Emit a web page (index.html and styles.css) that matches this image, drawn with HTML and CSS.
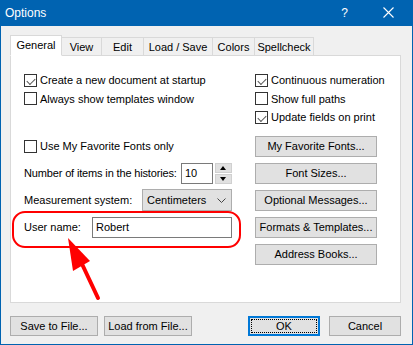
FILE: index.html
```html
<!DOCTYPE html>
<html lang="en">
<head>
  <meta charset="UTF-8" />
  <title>Options</title>
  <link rel="stylesheet" href="styles.css">
</head>
<body>
  <div class="window">
    <!-- TITLE BAR -->
    <div class="titlebar">
      <span class="title">Options</span>
      <span class="help">?</span>
      <svg class="close" width="11" height="11" viewBox="0 0 11 11">
        <path d="M0.5 0.5 L10.5 10.5 M10.5 0.5 L0.5 10.5" stroke="#fff" stroke-width="1.1" fill="none"/>
      </svg>
    </div>

    <div class="client">
      <!-- TABS -->
      <div class="tabs">
        <a class="tab active">General</a>
        <a class="tab">View</a>
        <a class="tab">Edit</a>
        <a class="tab">Load / Save</a>
        <a class="tab">Colors</a>
        <a class="tab">Spellcheck</a>
      </div>

      <!-- GENERAL PANEL -->
      <div class="panel">
        <div class="checks">
          <label class="check"><span class="box on"></span>Create a new document at startup</label>
          <label class="check"><span class="box on"></span>Continuous numeration</label>
          <label class="check"><span class="box"></span>Always show templates window</label>
          <label class="check"><span class="box"></span>Show full paths</label>
          <div></div>
          <label class="check"><span class="box on"></span>Update fields on print</label>
        </div>

        <div class="rows">
          <div class="cell">
            <label class="check"><span class="box"></span>Use My Favorite Fonts only</label>
          </div>
          <div class="cell"><button class="btn side">My Favorite Fonts...</button></div>

          <div class="cell field">
            <span class="tight">Number of items in the histories:</span>
            <span class="spin-group">
              <span class="input num">10</span>
              <span class="spinner">
                <span class="spin up"></span>
                <span class="spin down"></span>
              </span>
            </span>
          </div>
          <div class="cell"><button class="btn side">Font Sizes...</button></div>

          <div class="cell field">
            <span>Measurement system:</span>
            <span class="select">Centimeters
              <svg width="9" height="5" viewBox="0 0 9 5"><path d="M0.5 0.5 L4.5 4.5 L8.5 0.5" stroke="#444" fill="none"/></svg>
            </span>
          </div>
          <div class="cell"><button class="btn side">Optional Messages...</button></div>

          <div class="cell field">
            <span>User name:</span>
            <span class="input name">Robert</span>
          </div>
          <div class="cell"><button class="btn side">Formats &amp; Templates...</button></div>

          <div class="cell"></div>
          <div class="cell"><button class="btn side">Address Books...</button></div>
        </div>
      </div>

      <!-- DIALOG BUTTONS -->
      <div class="footer">
        <button class="btn foot">Save to File...</button>
        <button class="btn foot">Load from File...</button>
        <span class="spacer"></span>
        <button class="btn foot default"><span class="focus">OK</span></button>
        <button class="btn foot">Cancel</button>
      </div>
    </div>

    <!-- ANNOTATION -->
    <svg class="markup" width="413" height="345" viewBox="0 0 413 345">
      <rect x="13" y="212" width="227" height="35" rx="12" ry="12" fill="none" stroke="#f00" stroke-width="2"/>
      <path d="M82 264 L98 298" stroke="#f00" stroke-width="4" stroke-linecap="round"/>
      <polygon points="68,238 73,271 90,261" fill="#f00"/>
    </svg>
  </div>
</body>
</html>
```

FILE: styles.css
```css
:root {
  --accent: #0063b1;
  --face: #f0f0f0;
  --btn: #e1e1e1;
  --btn-border: #adadad;
  --edge: #d9d9d9;
  --text: #000;
}

* { box-sizing: border-box; margin: 0; padding: 0; }
body {
  background: #fff;
  font-family: "Liberation Sans", Arial, sans-serif;
  font-size: 11px;
  color: var(--text);
}

.window {
  position: relative;
  width: 413px;
  height: 345px;
  background: var(--face);
  border: 1px solid var(--accent);
  border-top: 0;
  display: flex;
  flex-direction: column;
  white-space: nowrap;
}

/* TITLE BAR */
.titlebar {
  height: 26px;
  background: var(--accent);
  color: #fff;
  display: flex;
  align-items: center;
  padding: 0 0 1px 5px;
  margin: 0 -1px;
}
.title { font-size: 12px; flex: 1; }
.help { font-size: 12px; margin-right: 35px; }
.close { margin-right: 19px; }

/* CLIENT AREA */
.client {
  flex: 1;
  padding: 9px 11px 0 9px;
  display: flex;
  flex-direction: column;
}

.tabs {
  display: flex;
  align-items: flex-end;
  height: 21px;
  position: relative;
  z-index: 1;
  margin-bottom: -1px;
}
.tab {
  height: 19px;
  border: 1px solid var(--edge);
  border-left: 0;
  background: var(--face);
  display: flex;
  align-items: center;
  justify-content: center;
}
.tab.active {
  height: 21px;
  width: 52px;
  border: 1px solid var(--edge);
  border-bottom: 1px solid #fff;
  background: #fff;
  padding-bottom: 2px;
}
.tab:nth-child(2) { width: 40px; }
.tab:nth-child(3) { width: 42px; }
.tab:nth-child(4) { width: 69px; }
.tab:nth-child(5) { width: 42px; }
.tab:nth-child(6) { width: 59px; }

.panel {
  height: 248px;
  background: #fff;
  border: 1px solid var(--edge);
  padding: 15px 0 0 13px;
}

/* CHECKBOXES */
.checks {
  display: grid;
  grid-template-columns: 231px 1fr;
  grid-auto-rows: 18.5px;
}
.check {
  display: flex;
  align-items: center;
  gap: 3px;
}
.box {
  width: 13px;
  height: 13px;
  border: 1px solid #333;
  background: #fff;
  flex: none;
  position: relative;
}
.box.on::after {
  content: "";
  position: absolute;
  left: 2px; top: 1px;
  width: 7px; height: 4px;
  border-left: 1px solid #555;
  border-bottom: 1px solid #555;
  transform: translate(0, 2px) rotate(-45deg);
}

/* CONTROL ROWS */
.rows {
  display: grid;
  grid-template-columns: 231px 1fr;
  grid-auto-rows: 27px;
  margin-top: 6px;
}
.cell {
  display: flex;
  align-items: center;
}
.cell.field {
  justify-content: space-between;
  padding-right: 23px;
}
.tight { letter-spacing: -0.15px; }

.input {
  height: 21px;
  border: 1px solid #7a7a7a;
  background: #fff;
  display: flex;
  align-items: center;
  padding-left: 3px;
}
.input.num { width: 32px; }
.input.name { width: 140px; }

.spin-group { display: flex; align-items: center; gap: 2px; }
.spinner {
  display: flex;
  flex-direction: column;
  gap: 1px;
  height: 21px;
}
.spin {
  width: 17px;
  height: 10px;
  background: var(--btn);
  border: 1px solid #d0d0d0;
  position: relative;
}
.spin::after {
  content: "";
  position: absolute;
  left: 4px; top: 2px;
  border-left: 3.5px solid transparent;
  border-right: 3.5px solid transparent;
}
.spin.up::after { border-bottom: 4px solid #000; }
.spin.down::after { border-top: 4px solid #000; }

.select {
  width: 90px;
  height: 22px;
  background: var(--btn);
  border: 1px solid var(--btn-border);
  display: flex;
  align-items: center;
  justify-content: space-between;
  padding: 0 5px 0 4px;
}

/* BUTTONS */
.btn {
  font: inherit;
  color: inherit;
  background: var(--btn);
  border: 1px solid var(--btn-border);
  height: 21px;
  display: flex;
  align-items: center;
  justify-content: center;
}
.btn.side { width: 122px; }

.footer {
  display: flex;
  align-items: center;
  margin-top: 13px;
  gap: 6px;
}
.btn.foot { width: 88px; height: 20px; }
.spacer { flex: 1; }
.btn.default {
  width: 72px;
  border: 2px solid #0078d7;
  padding: 1px;
  margin-right: 3px;
}
.btn.foot:last-child { width: 72px; }
.focus {
  width: 100%;
  height: 100%;
  border: 1px dotted #000;
  display: flex;
  align-items: center;
  justify-content: center;
}

/* RED ANNOTATION OVERLAY */
.markup {
  position: absolute;
  left: -1px;
  top: 0;
  pointer-events: none;
}
```
